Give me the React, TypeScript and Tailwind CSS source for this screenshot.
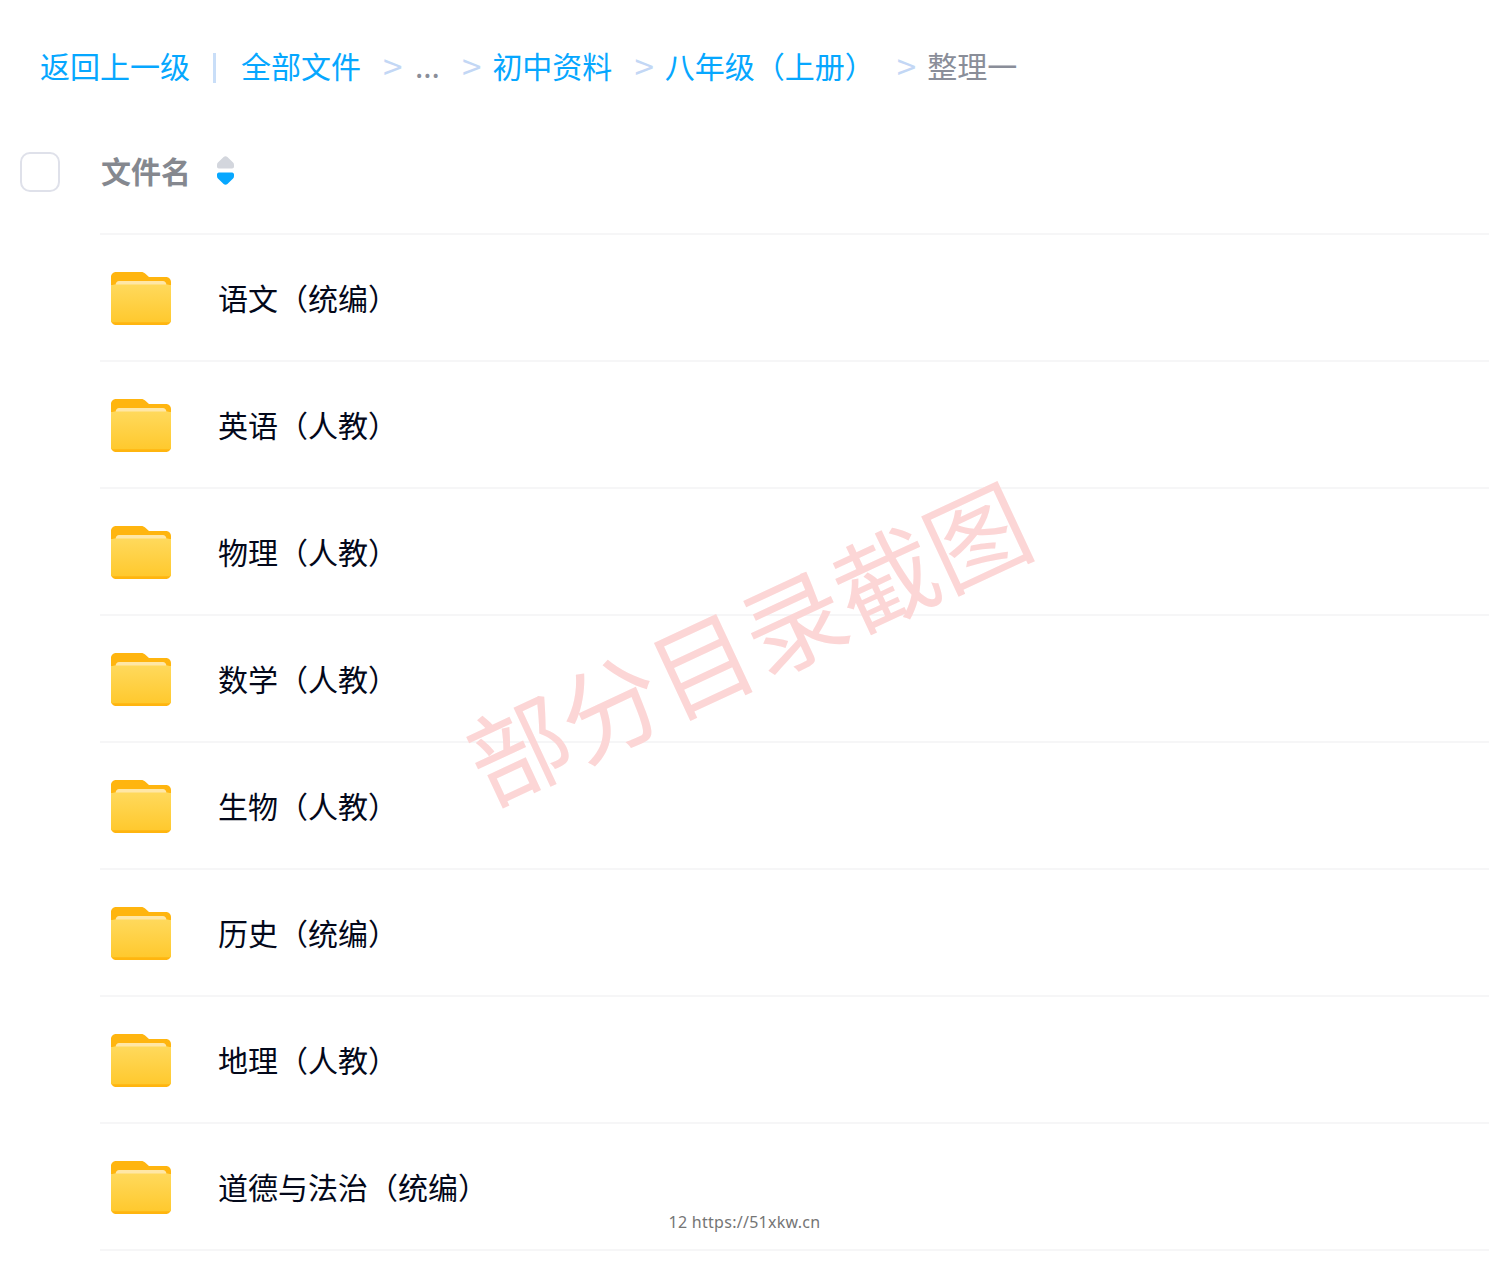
const rows = [
  '语文（统编）',
  '英语（人教）',
  '物理（人教）',
  '数学（人教）',
  '生物（人教）',
  '历史（统编）',
  '地理（人教）',
  '道德与法治（统编）',
];

function FolderIcon() {
  return (
    <svg width="60" height="53" viewBox="0 0 60 53" className="mt-[2px] shrink-0">
      <defs>
        <linearGradient id="folderFront" x1="0" y1="0" x2="0" y2="1">
          <stop offset="0" stopColor="#ffd95c" />
          <stop offset="1" stopColor="#ffc92e" />
        </linearGradient>
      </defs>
      <path d="M5 0h25c2 0 3 .6 4.400 1.800L38 5h17c2.800 0 5 2.200 5 5v38c0 2.800-2.200 5-5 5H5c-2.800 0-5-2.200-5-5V5c0-2.800 2.200-5 5-5z" fill="#ffb50f" />
      <path d="M8 9h44c1.800 0 3 1 3.500 4h-51C5 10 6.200 9 8 9z" fill="#ffe7a6" />
      <path d="M0 13c2 0 3.200-.5 4.500-.5h51c1.300 0 2.500.5 4.500.5v35c0 1-.2 1.600-.5 2.200H.5C.2 49.600 0 49 0 48z" fill="url(#folderFront)" />
    </svg>
  );
}

function SortIcon() {
  return (
    <svg width="17" height="30" viewBox="0 0 18 30" preserveAspectRatio="none">
      <path d="M7 1c1.200-1.100 2.800-1.100 4 0l6 5.500c.7.700 1 1.400 1 2.500v1.500c0 1-.8 2-2 2H2c-1.200 0-2-1-2-2V9c0-1.100.3-1.800 1-2.500z" fill="#d3d6dd" />
      <path d="M7 28c1.200 1.100 2.800 1.100 4 0l6-5.500c.7-.7 1-1.400 1-2.500v-1.500c0-1-.8-2-2-2H2c-1.200 0-2 1-2 2V20c0 1.100.3 1.800 1 2.500z" fill="#06a7ff" />
    </svg>
  );
}

function Sep() {
  return <span className="ml-[22px] mr-[11px] text-[35px] leading-none text-[#c3d7f5]">&gt;</span>;
}

export default function App() {
  return (
    <div className="relative h-[1264px] overflow-hidden bg-white font-['Noto_Sans_CJK_SC','Noto_Sans',sans-serif]">
      {/* Breadcrumb */}
      <div className="flex h-[134px] items-center pb-[5px] pl-[40px] text-[30px] leading-none text-[#06a7ff] whitespace-nowrap">
        <span>返回上一级</span>
        <span className="ml-[23px] mr-[25px] mt-[6px] h-[30px] w-[3px] bg-[#c9def8]" />
        <span>全部文件</span>
        <Sep />
        <span className="ml-[1.500px] w-[25px] text-[#8a8e99]">...</span>
        <Sep />
        <span>初中资料</span>
        <Sep />
        <span>八年级（上册）</span>
        <Sep />
        <span className="text-[#8a8e99]">整理一</span>
      </div>

      {/* Table header */}
      <div className="flex h-[76px] items-center pl-[20px] pb-[2px]">
        <span className="mt-[2px] h-[40px] w-[40px] rounded-[10px] border-2 border-[#dfe1ea] bg-white" />
        <span className="mb-[2px] ml-[41px] text-[30px] leading-none font-bold text-[#85888f]">文件名</span>
        <span className="ml-[26px] flex"><SortIcon /></span>
      </div>

      {/* Rows */}
      <div className="ml-[100px] mt-[23px] border-t-2 border-[#f6f6f7]">
        {rows.map((name) => (
          <div key={name} className="flex h-[127px] items-center border-b-2 border-[#f6f6f7] pl-[11px]">
            <FolderIcon />
            <span className="ml-[47px] pb-[2px] text-[30px] leading-none text-[#03081a]">{name}</span>
          </div>
        ))}
      </div>

      {/* Watermark */}
      <div className="pointer-events-none absolute left-[746px] top-[639px] -translate-x-1/2 -translate-y-1/2 -rotate-[25deg] text-[101px] leading-none whitespace-nowrap text-[#fcd6d6]">
        部分目录截图
      </div>

      {/* Footer url */}
      <div className="pointer-events-none absolute left-0 right-0 top-[1212px] text-center font-['Noto_Sans',sans-serif] text-[16px] leading-[21px] tracking-[0.27px] text-[#757575]">
        12 https://51xkw.cn
      </div>
    </div>
  );
}
